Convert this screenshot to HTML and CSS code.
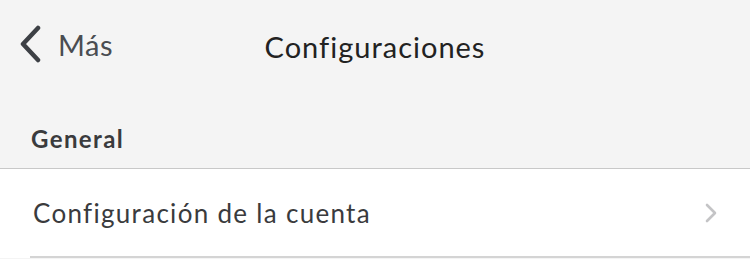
FILE: index.html
```html
<!doctype html>
<html>
  <head>
    <title>Configuraciones</title>
    <meta name="viewport" content="width=device-width, user-scalable=no">
    <link rel="stylesheet" href="styles.css">
  </head>
  <body>
    <header class="nav-bar">
      <a class="back-btn" href="#">
        <svg class="back-icon" width="24" height="38" viewBox="0 0 24 38">
          <path d="M20 3 L5 19 L20 35" fill="none" stroke="#3d4045" stroke-width="4.5" stroke-linecap="round" stroke-linejoin="round"/>
        </svg>
        <span>Más</span>
      </a>
      <h1 class="nav-title">Configuraciones</h1>
    </header>
    <div class="section-head">General</div>
    <ul class="settings-list">
      <li class="settings-row">
        <span>Configuración de la cuenta</span>
        <svg class="row-chevron" width="14" height="20" viewBox="0 0 14 20">
          <path d="M3 2 L11 10 L3 18" fill="none" stroke="#c4c4c6" stroke-width="2.6" stroke-linecap="round" stroke-linejoin="round"/>
        </svg>
      </li>
    </ul>
  </body>
</html>
```

FILE: styles.css
```css
body {
  margin: 0;
  font-family: "Lato", "Noto Sans", sans-serif;
  background-color: #f4f4f4;
  color: #333;
}
.nav-bar {
  position: relative;
  height: 92px;
  display: flex;
  align-items: center;
  justify-content: center;
}
.back-btn {
  position: absolute;
  left: 18px;
  top: 25px;
  display: flex;
  align-items: center;
  gap: 16px;
  color: #4a4d51;
  text-decoration: none;
  font-size: 29px;
  letter-spacing: 0.5px;
}
.back-icon {
  display: block;
}
.nav-title {
  margin: 0;
  font-size: 29px;
  font-weight: normal;
  color: #222;
  letter-spacing: 1px;
}
.section-head {
  height: 77px;
  box-sizing: border-box;
  padding: 32px 0 0 31px;
  font-size: 24px;
  font-weight: bold;
  color: #3a3b3d;
  letter-spacing: 1.4px;
  border-bottom: 1px solid #c8c8c8;
}
.settings-list {
  margin: 0;
  padding: 0 0 0 30px;
  list-style: none;
  background-color: #fff;
}
.settings-row {
  height: 87px;
  display: flex;
  align-items: center;
  justify-content: space-between;
  padding: 0 32px 0 3px;
  font-size: 26px;
  color: #3a3b3d;
  letter-spacing: 1.3px;
  border-bottom: 2px solid #d4d4d4;
}
.row-chevron {
  display: block;
}
```
